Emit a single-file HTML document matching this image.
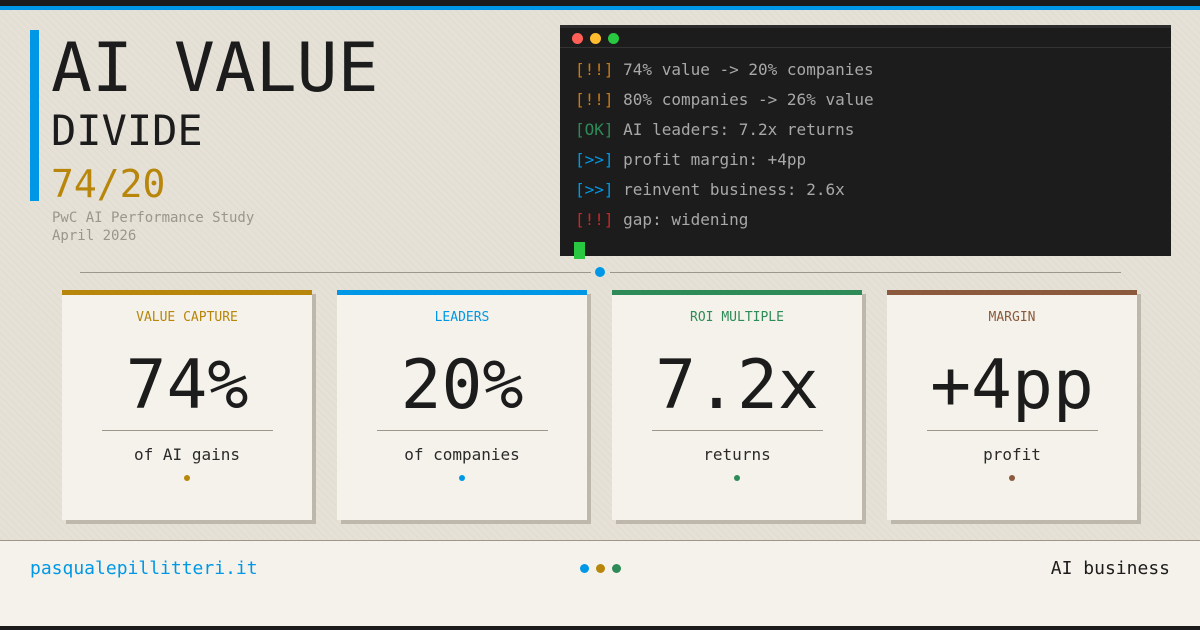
<!DOCTYPE html>
<html><head><meta charset="utf-8"><style>
*{margin:0;padding:0;box-sizing:border-box}
body{width:1200px;height:630px;overflow:hidden;position:relative;font-family:"DejaVu Sans Mono","Liberation Mono",monospace;background:#e6e1d7;
background-image:repeating-linear-gradient(45deg,rgba(0,0,0,0.025) 0 1px,transparent 1px 5px);}
.a{position:absolute;white-space:nowrap}
.card{position:absolute;top:290px;width:250px;height:230px;background:#f4f2ea;box-shadow:4px 4px 0 #bdb8ab;border-top:5px solid;text-align:center}
.card .l{position:absolute;top:15px;left:0;right:0;font-size:13px}
.card .n{position:absolute;top:46px;left:0;right:0;font-size:68px;line-height:90px;color:#1c1c1c}
.card .hr{position:absolute;top:135px;left:40px;width:171px;height:1px;background:#9c978a}
.card .s{position:absolute;top:150px;left:0;right:0;font-size:16px;color:#2a2a2a}
.card .d{position:absolute;top:180px;left:122px;width:6px;height:6px;border-radius:50%}
.t{position:absolute;left:575px;font-size:16px;color:#a8a8a8;white-space:pre;line-height:20px}
</style></head><body>
<div class="a" style="left:0;top:0;width:1200px;height:6px;background:#1c1c1c"></div>
<div class="a" style="left:0;top:6px;width:1200px;height:4px;background:#0098e6"></div>
<div class="a" style="left:30px;top:30px;width:9px;height:171px;background:#0098e6"></div>
<div class="a" style="left:51px;top:27px;font-size:68px;line-height:84px;color:#1c1c1c">AI VALUE</div>
<div class="a" style="left:51px;top:105px;font-size:42px;line-height:52px;color:#1c1c1c">DIVIDE</div>
<div class="a" style="left:51px;top:160px;font-size:38px;line-height:48px;color:#b8860b">74/20</div>
<div class="a" style="left:52px;top:209px;font-size:14px;line-height:18px;color:#9a968c">PwC AI Performance Study<br>April 2026</div>

<div class="a" style="left:560px;top:25px;width:611px;height:231px;background:#1c1c1c;border-top:3px solid #2c2c2c"></div>
<div class="a" style="left:560px;top:47px;width:611px;height:1px;background:#333"></div>
<div class="a" style="left:572px;top:33px;width:11px;height:11px;border-radius:50%;background:#ff5f57"></div>
<div class="a" style="left:590px;top:33px;width:11px;height:11px;border-radius:50%;background:#febc2e"></div>
<div class="a" style="left:608px;top:33px;width:11px;height:11px;border-radius:50%;background:#28c840"></div>
<div class="t" style="top:60px"><span style="color:#c77a1a">[!!]</span> 74% value -&gt; 20% companies</div>
<div class="t" style="top:90px"><span style="color:#c77a1a">[!!]</span> 80% companies -&gt; 26% value</div>
<div class="t" style="top:120px"><span style="color:#2e8b57">[OK]</span> AI leaders: 7.2x returns</div>
<div class="t" style="top:150px"><span style="color:#0098e6">[&gt;&gt;]</span> profit margin: +4pp</div>
<div class="t" style="top:180px"><span style="color:#0098e6">[&gt;&gt;]</span> reinvent business: 2.6x</div>
<div class="t" style="top:210px"><span style="color:#c62828">[!!]</span> gap: widening</div>
<div class="a" style="left:574px;top:242px;width:11px;height:17px;background:#28c840"></div>

<div class="a" style="left:80px;top:272px;width:511px;height:1px;background:#9c978a"></div>
<div class="a" style="left:610px;top:272px;width:511px;height:1px;background:#9c978a"></div>
<div class="a" style="left:595px;top:267px;width:10px;height:10px;border-radius:50%;background:#0098e6"></div>

<div class="card" style="left:62px;border-color:#b8860b"><div class="l" style="color:#b8860b">VALUE CAPTURE</div><div class="n">74%</div><div class="hr"></div><div class="s">of AI gains</div><div class="d" style="background:#b8860b"></div></div>
<div class="card" style="left:337px;border-color:#0098e6"><div class="l" style="color:#0098e6">LEADERS</div><div class="n">20%</div><div class="hr"></div><div class="s">of companies</div><div class="d" style="background:#0098e6"></div></div>
<div class="card" style="left:612px;border-color:#2e8b57"><div class="l" style="color:#2e8b57">ROI MULTIPLE</div><div class="n">7.2x</div><div class="hr"></div><div class="s">returns</div><div class="d" style="background:#2e8b57"></div></div>
<div class="card" style="left:887px;border-color:#8b5a3c"><div class="l" style="color:#8b5a3c">MARGIN</div><div class="n">+4pp</div><div class="hr"></div><div class="s">profit</div><div class="d" style="background:#8b5a3c"></div></div>

<div class="a" style="left:0;top:540px;width:1200px;height:86px;background:#f4f2ea;border-top:1px solid #9c978a"></div>
<div class="a" style="left:30px;top:558px;font-size:18px;line-height:22px;color:#0098e6">pasqualepillitteri.it</div>
<div class="a" style="left:580px;top:564px;width:9px;height:9px;border-radius:50%;background:#0098e6"></div>
<div class="a" style="left:596px;top:564px;width:9px;height:9px;border-radius:50%;background:#b8860b"></div>
<div class="a" style="left:612px;top:564px;width:9px;height:9px;border-radius:50%;background:#2e8b57"></div>
<div class="a" style="right:30px;top:558px;font-size:18px;line-height:22px;color:#1c1c1c">AI business</div>
<div class="a" style="left:0;top:626px;width:1200px;height:4px;background:#1c1c1c"></div>
</body></html>
